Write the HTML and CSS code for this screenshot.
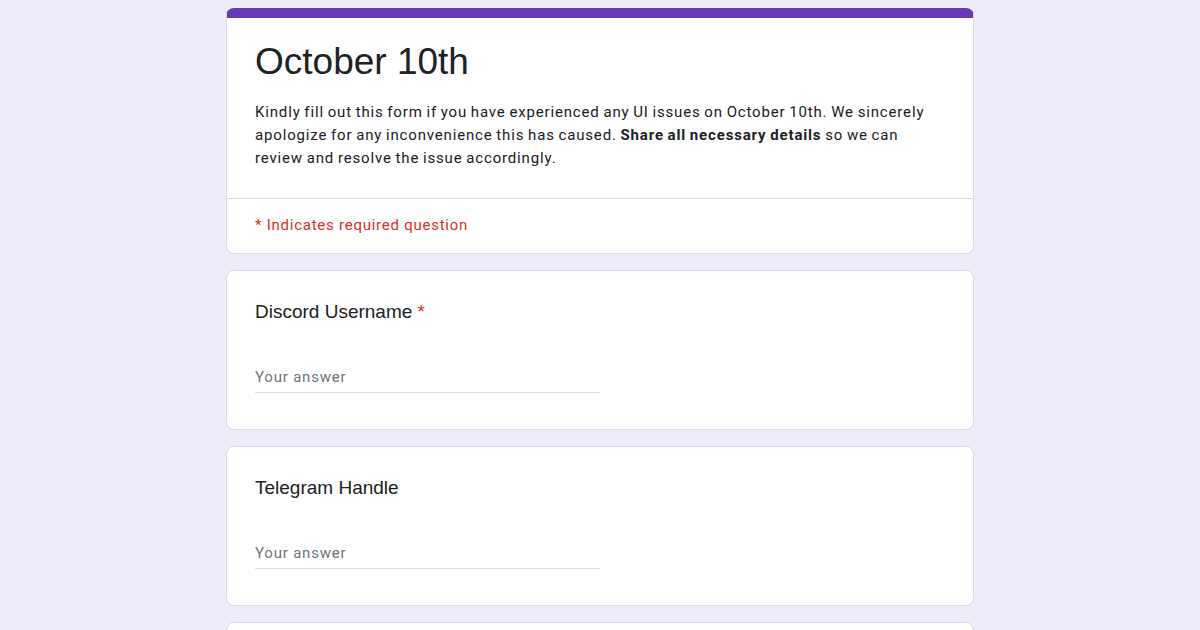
FILE: index.html
```html
<!DOCTYPE html>
<html>
<head>
<meta charset="utf-8">
<link rel="stylesheet" href="styles.css">
</head>
<body>
<div class="form">
  <div class="card header">
    <div class="header-main">
      <h1 class="title">October 10th</h1>
      <p class="desc">Kindly fill out this form if you have experienced any UI issues on October 10th. We sincerely apologize for any inconvenience this has caused. <b>Share all necessary details</b> so we can review and resolve the issue accordingly.</p>
    </div>
    <div class="required-note">* Indicates required question</div>
  </div>
  <div class="card question">
    <div class="q-title">Discord Username <span class="star">*</span></div>
    <div class="answer">Your answer</div>
  </div>
  <div class="card question">
    <div class="q-title">Telegram Handle</div>
    <div class="answer">Your answer</div>
  </div>
  <div class="card question">
    <div class="q-title">&nbsp;</div>
    <div class="answer">Your answer</div>
  </div>
</div>
</body>
</html>
```

FILE: styles.css
```css
html, body {
  margin: 0;
  padding: 0;
}
body {
  background: #efebf8;
  font-family: Roboto, "Liberation Sans", Arial, sans-serif;
  color: #202124;
  height: 630px;
  overflow: hidden;
}
.form {
  width: 748px;
  margin: 0 auto;
  padding-top: 8px;
  display: flex;
  flex-direction: column;
  gap: 16px;
}
.card {
  background: #fff;
  border: 1px solid #dadce0;
  border-radius: 8px;
  box-sizing: border-box;
}
.header {
  border-top: 10px solid #673ab7;
}
.header-main {
  padding: 20px 28px 28px 28px;
  border-bottom: 1px solid #dadce0;
}
.title {
  margin: 0;
  font-family: "Liberation Sans", Arial, sans-serif;
  font-weight: 400;
  font-size: 37px;
  line-height: 48px;
  color: #202124;
}
.desc {
  margin: 15px 0 0 0;
  font-size: 15px;
  line-height: 23px;
  color: #202124;
  letter-spacing: 0.84px;
  word-spacing: -0.8px;
}
.desc b {
  font-weight: 700;
}
.required-note {
  padding: 15px 28px 17px 28px;
  color: #d93025;
  font-size: 15px;
  line-height: 22px;
  letter-spacing: 0.75px;
}
.question {
  padding: 28px 28px 36px 28px;
  height: 160px;
}
.q-title {
  font-family: "Liberation Sans", Arial, sans-serif;
  font-size: 19px;
  line-height: 26px;
  color: #202124;
}
.star {
  color: #d93025;
}
.answer {
  margin-top: 40px;
  width: 50%;
  font-size: 15px;
  line-height: 24px;
  color: #70757a;
  letter-spacing: 0.8px;
  padding-bottom: 3px;
  border-bottom: 1px solid #e0e0e0;
}
```
